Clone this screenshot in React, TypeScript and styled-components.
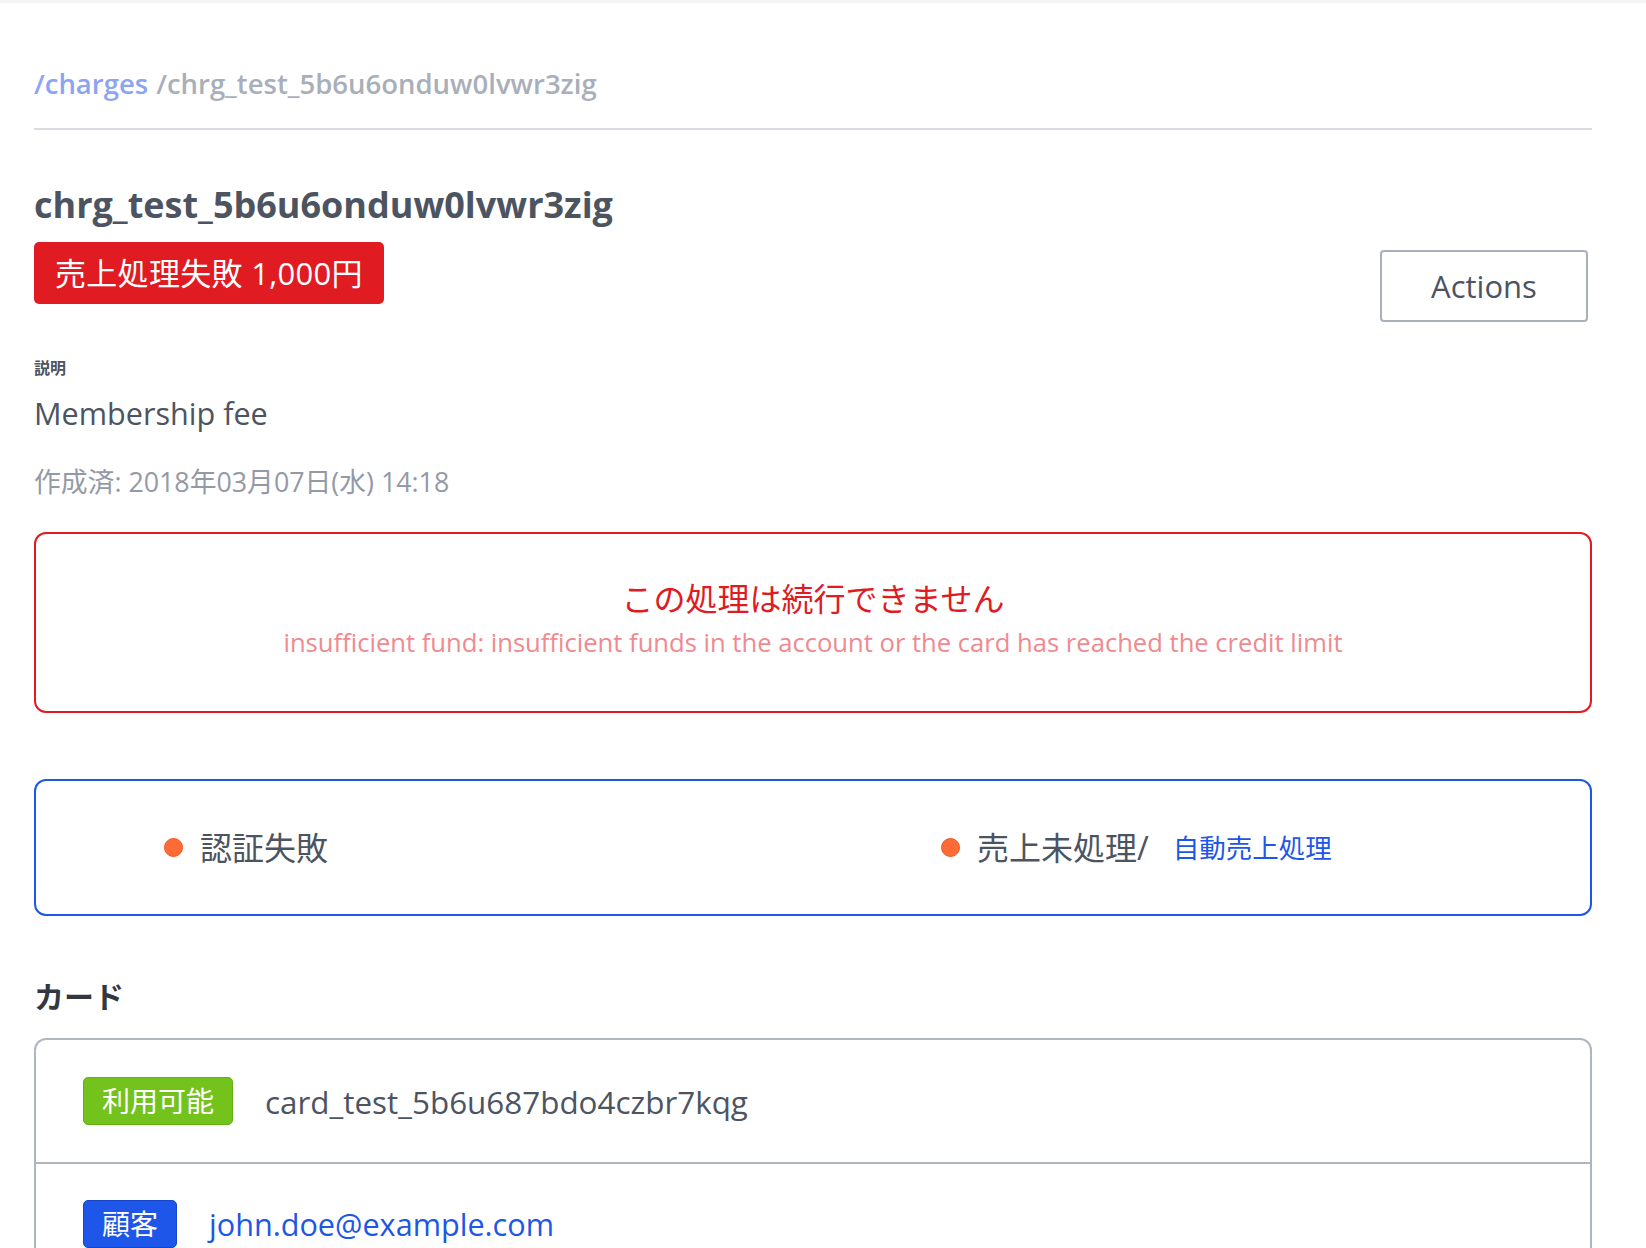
import React from "react";
import styled, { createGlobalStyle } from "styled-components";

const FONT = `"Open Sans", "Noto Sans CJK JP", sans-serif`;

const GlobalStyle = createGlobalStyle`
  html, body {
    margin: 0;
    padding: 0;
    background: #ffffff;
  }
  body {
    font-family: ${FONT};
    color: #4d5461;
  }
  * { box-sizing: border-box; }
`;

const Page = styled.div`
  min-height: 1248px;
  padding: 0 54px 60px 34px;
  border-top: 3px solid #f3f4f6;
`;

const Breadcrumb = styled.nav`
  padding-top: 63px;
  padding-bottom: 26px;
  border-bottom: 2px solid #d9dce1;
  font-size: 27.5px;
  line-height: 36px;
  font-weight: 600;
  color: #a9afba;
`;

const CrumbLink = styled.a`
  color: #8ba4f3;
  text-decoration: none;
  margin-right: 8px;
`;

const Title = styled.h1`
  margin: 53px 0 0;
  font-size: 36px;
  line-height: 44px;
  font-weight: 700;
  color: #4d5461;
`;

const HeaderRow = styled.div`
  display: flex;
  justify-content: space-between;
  align-items: flex-start;
  margin-top: 15px;
  padding-right: 4px;
`;

const StatusBadge = styled.span`
  display: inline-flex;
  align-items: center;
  height: 62px;
  padding: 0 21px;
  background: #e01b22;
  border-radius: 5px;
  color: #ffffff;
  font-size: 31px;
  letter-spacing: 0.3px;
  line-height: 1;
`;

const ActionsButton = styled.button`
  margin-top: 8px;
  width: 208px;
  height: 72px;
  background: #ffffff;
  border: 2px solid #aab0bb;
  border-radius: 4px;
  font-family: ${FONT};
  font-size: 31px;
  color: #4d5461;
  cursor: pointer;
`;

const FieldLabel = styled.div`
  margin-top: 35px;
  font-size: 16px;
  line-height: 22px;
  font-weight: 700;
  color: #4d5461;
`;

const FieldValue = styled.div`
  margin-top: 14px;
  font-size: 30.6px;
  line-height: 40px;
  color: #4d5461;
`;

const Created = styled.div`
  margin-top: 32px;
  font-size: 26.8px;
  line-height: 34px;
  color: #949aa5;
`;

const Panel = styled.section<{ $tone: "error" | "info" }>`
  display: flex;
  border: 2px solid ${(p) => (p.$tone === "error" ? "#e01b22" : "#1d56e8")};
  border-radius: 12px;
`;

const ErrorPanel = styled(Panel)`
  margin-top: 33px;
  height: 181px;
  flex-direction: column;
  align-items: center;
  justify-content: center;
`;

const ErrorTitle = styled.div`
  margin-top: -8px;
  font-size: 32px;
  line-height: 40px;
  color: #e01b22;
`;

const ErrorDetail = styled.div`
  margin-top: 8px;
  font-size: 25.6px;
  line-height: 32px;
  color: #f08a8f;
`;

const StatusPanel = styled(Panel)`
  margin-top: 66px;
  height: 137px;
  display: grid;
  grid-template-columns: 1fr 1fr;
  align-items: center;
`;

const StatusItem = styled.div`
  display: flex;
  align-items: center;
  padding-left: 128px;
  font-size: 32px;
  line-height: 40px;
  color: #4d5461;
`;

const Dot = styled.span`
  width: 19px;
  height: 19px;
  border-radius: 50%;
  background: #ff6b35;
  border: 1px solid #f0541c;
  margin-right: 17px;
  flex: none;
`;

const StatusLink = styled.a`
  margin-left: 24px;
  font-size: 26.5px;
  color: #1d56e8;
  text-decoration: none;
`;

const SectionTitle = styled.h2`
  margin: 61px 0 0;
  font-size: 30px;
  line-height: 40px;
  font-weight: 700;
  color: #333840;
`;

const CardBox = styled.div`
  margin-top: 21px;
  border: 2px solid #b0b6c0;
  border-radius: 12px;
  overflow: hidden;
`;

const CardRow = styled.div`
  display: flex;
  align-items: center;
  height: 122px;
  padding-left: 47px;
  & + & {
    border-top: 2px solid #b0b6c0;
  }
`;

const Tag = styled.span<{ $color: "green" | "blue" }>`
  display: inline-flex;
  align-items: center;
  height: 48px;
  padding: 0 18px;
  border-radius: 5px;
  background: ${(p) => (p.$color === "green" ? "#74c21c" : "#1d56e8")};
  border: 1px solid ${(p) => (p.$color === "green" ? "#62ad12" : "#1546cc")};
  color: #ffffff;
  font-size: 28px;
  line-height: 1;
`;

const RowText = styled.span<{ $link?: boolean }>`
  margin-left: 32px;
  font-size: ${(p) => (p.$link ? "30.6px" : "31.4px")};
  color: ${(p) => (p.$link ? "#1d56e8" : "#4d5461")};
`;

export default function App() {
  return (
    <>
      <GlobalStyle />
      <Page>
        <Breadcrumb>
          <CrumbLink href="#">/charges</CrumbLink>
          /chrg_test_5b6u6onduw0lvwr3zig
        </Breadcrumb>

        <Title>chrg_test_5b6u6onduw0lvwr3zig</Title>

        <HeaderRow>
          <StatusBadge>売上処理失敗 1,000円</StatusBadge>
          <ActionsButton>Actions</ActionsButton>
        </HeaderRow>

        <FieldLabel>説明</FieldLabel>
        <FieldValue>Membership fee</FieldValue>
        <Created>作成済: 2018年03月07日(水) 14:18</Created>

        <ErrorPanel $tone="error">
          <ErrorTitle>この処理は続行できません</ErrorTitle>
          <ErrorDetail>
            insufficient fund: insufficient funds in the account or the card has reached the credit limit
          </ErrorDetail>
        </ErrorPanel>

        <StatusPanel $tone="info">
          <StatusItem>
            <Dot />
            認証失敗
          </StatusItem>
          <StatusItem>
            <Dot />
            売上未処理/
            <StatusLink href="#">自動売上処理</StatusLink>
          </StatusItem>
        </StatusPanel>

        <SectionTitle>カード</SectionTitle>
        <CardBox>
          <CardRow>
            <Tag $color="green">利用可能</Tag>
            <RowText>card_test_5b6u687bdo4czbr7kqg</RowText>
          </CardRow>
          <CardRow>
            <Tag $color="blue">顧客</Tag>
            <RowText $link>john.doe@example.com</RowText>
          </CardRow>
        </CardBox>
      </Page>
    </>
  );
}
